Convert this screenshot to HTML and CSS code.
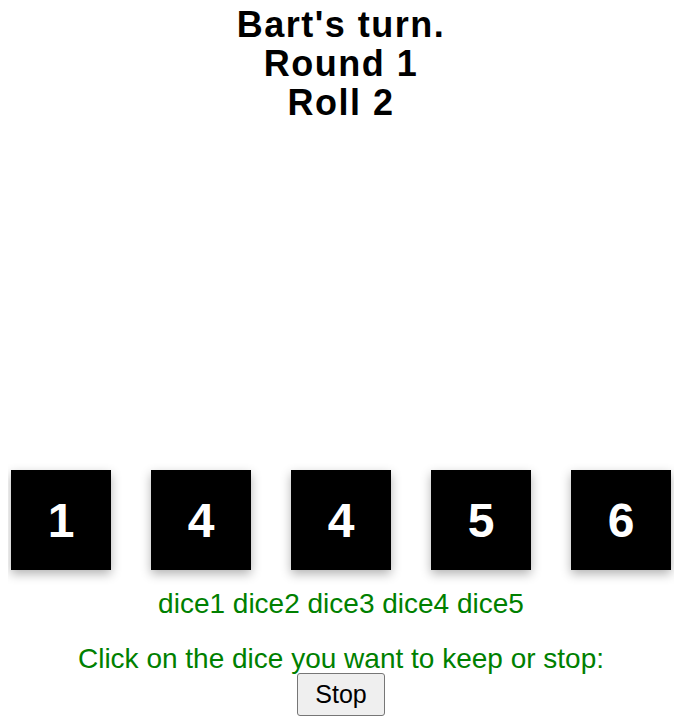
FILE: index.html
```html
<!DOCTYPE html>
<html>
<head>
<meta charset="utf-8">
<link rel="stylesheet" href="styles.css">
</head>
<body>
<h1 class="title">Bart's turn.<br>Round 1<br>Roll 2</h1>
<div class="board">
  <div class="dice-row">
    <div class="die">1</div>
    <div class="die">4</div>
    <div class="die">4</div>
    <div class="die">5</div>
    <div class="die">6</div>
  </div>
  <div class="labels">dice1 dice2 dice3 dice4 dice5</div>
  <div class="prompt">Click on the dice you want to keep or stop:</div>
  <div class="actions"><button class="stop">Stop</button></div>
</div>
</body>
</html>
```
FILE: styles.css
```css
body {
  margin: 8px 18px 8px 8px;
  font-family: "Liberation Sans", Arial, sans-serif;
  background: #fff;
}
.title {
  margin: -3px 0 0;
  font-size: 36px;
  line-height: 39px;
  letter-spacing: 1.5px;
  font-weight: bold;
  text-align: center;
  color: #000;
}
.board {
  margin-top: 348px;
}
.dice-row {
  display: flex;
  justify-content: center;
  gap: 40px;
}
.die {
  width: 100px;
  height: 100px;
  flex: 0 0 100px;
  background: #000;
  color: #fff;
  font-weight: bold;
  font-size: 48px;
  display: flex;
  align-items: center;
  justify-content: center;
  box-shadow: 0 4px 10px rgba(0, 0, 0, 0.3);
}
.labels {
  margin-top: 18px;
  text-align: center;
  color: #008000;
  font-size: 28px;
}
.prompt {
  margin-top: 23px;
  text-align: center;
  color: #008000;
  font-size: 28px;
}
.actions {
  margin-top: -2px;
  text-align: center;
}
.stop {
  font-family: "Liberation Sans", Arial, sans-serif;
  font-size: 25px;
  color: #000;
  background: #efefef;
  border: 1px solid #767676;
  border-radius: 3px;
  padding: 6px 17px;
}
```
